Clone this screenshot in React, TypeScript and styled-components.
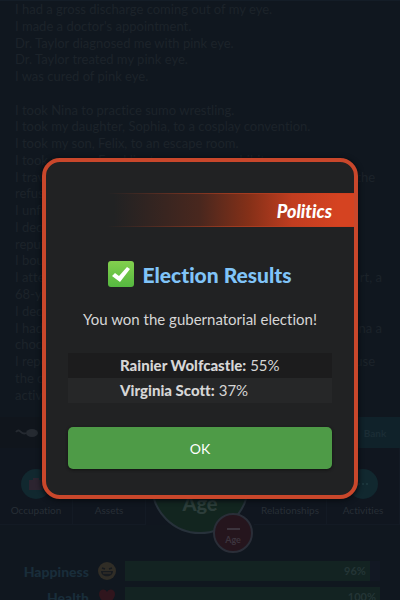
import React from "react";
import styled, { createGlobalStyle } from "styled-components";

const GlobalStyle = createGlobalStyle`
  * { box-sizing: border-box; }
  body {
    margin: 0;
    background: #10171f;
    font-family: Lato, "Open Sans", sans-serif;
    font-variant-ligatures: none;
    overflow: hidden;
  }
  button { font: inherit; color: inherit; border: 0; margin: 0; padding: 0; background: none; cursor: pointer; }
`;

const Screen = styled.div`
  position: relative;
  height: 100vh;
  overflow: hidden;
`;

const Game = styled.main`
  display: flex;
  flex-direction: column;
`;

const Journal = styled.section`
  height: 417px;
  padding: 0 15px;
  border-top: 1px solid #141d27;
  font-size: 13px;
  color: #1c232a;
`;

const Entry = styled.p`
  display: flex;
  justify-content: space-between;
  margin: 0;
  height: 1.29em;
  line-height: 1.29;
  white-space: pre;
`;

const LineEnd = styled.span<{ $short?: boolean }>`
  padding-right: ${(p) => (p.$short ? 10 : 3)}px;
`;

const BankBar = styled.div`
  display: flex;
  justify-content: space-between;
  align-items: center;
  height: 31px;
  padding-left: 15px;
  background: #10151c;
`;

const BankButton = styled.button`
  width: 80px;
  height: 31px;
  padding-left: 30px;
  background: #10222a;
  color: #1b2d35;
  font-size: 10px;
  font-weight: 700;
`;

const Nav = styled.nav`
  position: relative;
  display: grid;
  grid-template-columns: 1fr 1fr 108px 1fr 1fr;
  height: 77px;
  background: #10161f;
`;

const NavItem = styled.button`
  display: flex;
  flex-direction: column;
  align-items: center;
  gap: 4px;
  padding-top: 21px;
  border-right: 1px solid #131a24;
  border-bottom: 1px solid #131a24;
  color: #272e36;
  font-size: 10px;
  line-height: 14px;
`;

const NavIcon = styled.span`
  display: grid;
  place-items: center;
  width: 30px;
  height: 30px;
  border-radius: 50%;
  background: #11282f;
`;

const AgeButton = styled.button`
  position: absolute;
  left: 50%;
  top: -12px;
  width: 98px;
  height: 98px;
  margin-left: -49px;
  padding-top: 36px;
  border: 2px solid #27313a;
  border-radius: 50%;
  background: #12251f;
  color: #2c3d3a;
  font-size: 20px;
  font-weight: 900;
`;

const UndoAge = styled.button`
  position: absolute;
  left: 50%;
  top: 65px;
  display: flex;
  flex-direction: column;
  align-items: center;
  gap: 4px;
  width: 40px;
  height: 40px;
  margin-left: 13px;
  padding-top: 13px;
  border: 2px solid #2a2e38;
  border-radius: 50%;
  background: #25151d;
  color: #3c343d;
  font-size: 9px;
  line-height: 12px;
  font-weight: 700;
`;

const Minus = styled.span`
  width: 13px;
  height: 2px;
  background: #3c343d;
`;

const Stats = styled.section`
  display: grid;
  gap: 6px;
  padding: 36px 20px 0 0;
`;

const Stat = styled.div`
  display: grid;
  grid-template-columns: 89px 18px 1fr;
  column-gap: 9px;
  align-items: center;
  height: 20px;
`;

const StatName = styled.span`
  text-align: right;
  color: #192d3a;
  font-size: 14px;
  font-weight: 900;
`;

const Track = styled.div`
  height: 20px;
  background: #121823;
`;

const Fill = styled.div`
  height: 20px;
  padding-right: 4px;
  background: #132322;
  color: #243536;
  font-size: 11px;
  font-weight: 700;
  line-height: 20px;
  text-align: right;
`;

const Overlay = styled.div`
  position: absolute;
  inset: 0;
  padding: 158px 42px 0;
`;

const Dialog = styled.section`
  padding-top: 31px;
  padding-bottom: 26px;
  border: 4px solid #c9472b;
  border-radius: 18px;
  background: #212223;
  box-shadow: 0 1px 5px 1px #080d12;
  color: #d6d6d6;
`;

const Banner = styled.div`
  height: 34px;
  padding-right: 22px;
  background: linear-gradient(90deg, #212223 22%, #49271e 50%, #853018 66%, #c13d20 80%, #d54321 95%);
  border: solid;
  border-width: 1px 0;
  border-image: linear-gradient(90deg, #212223 20%, #9c3a20 60%, #d04020 90%) 1;
  color: #fff;
  font-size: 18px;
  font-style: italic;
  font-weight: 900;
  line-height: 34px;
  text-align: right;
`;

const Body = styled.div`
  padding: 34px 22px 0;
`;

const Title = styled.h1`
  display: flex;
  justify-content: center;
  align-items: center;
  gap: 8px;
  height: 26px;
  margin: 0;
  color: #80c4f8;
  font-size: 21px;
  font-weight: 900;
`;

const Message = styled.p`
  margin: 21px 0 23px;
  font-size: 15px;
  line-height: 22px;
  text-align: center;
`;

const Results = styled.table`
  display: block;
  width: 100%;
  font-size: 15px;
  line-height: 25px;
`;

const ResultRows = styled.tbody`
  display: block;
`;

const Result = styled.tr`
  display: flex;
  gap: 4px;
  padding-left: 52px;
  background: #1c1c1d;
  &:nth-child(even) { background: #262728; }
`;

const Candidate = styled.th`
  padding: 0;
  font-weight: 900;
  text-align: left;
`;

const Share = styled.td`
  padding: 0;
`;

const OkButton = styled.button`
  display: block;
  width: 100%;
  height: 42px;
  margin-top: 24px;
  border-radius: 5px;
  background: #4e9b47;
  box-shadow: 0 1px 3px #111;
  color: #fff;
  font-size: 14px;
`;

const entries: { start: string; end?: string; short?: boolean }[] = [
  { start: "I had a gross discharge coming out of my eye." },
  { start: "I made a doctor's appointment." },
  { start: "Dr. Taylor diagnosed me with pink eye." },
  { start: "Dr. Taylor treated my pink eye." },
  { start: "I was cured of pink eye." },
  { start: "" },
  { start: "I took Nina to practice sumo wrestling." },
  { start: "I took my daughter, Sophia, to a cosplay convention." },
  { start: "I took my son, Felix, to an escape room." },
  { start: "I took my son, Franklin, to a museum exhibit." },
  { start: "I traveled", end: "the", short: true },
  { start: "refused" },
  { start: "I unfollowed" },
  { start: "I declined" },
  { start: "reputation" },
  { start: "I bought" },
  { start: "I attended", end: "rt, a" },
  { start: "68-year-old" },
  { start: "I declined" },
  { start: "I had", end: "na a" },
  { start: "chocolate" },
  { start: "I reported", end: "use", short: true },
  { start: "the city" },
  { start: "activities" },
];

const App = () => (
  <Screen>
    <GlobalStyle />
    <Game>
      <Journal>
        {entries.map(({ start, end, short }, i) => (
          <Entry key={i}>
            <span>{start}</span>
            {end && <LineEnd $short={short}>{end}</LineEnd>}
          </Entry>
        ))}
      </Journal>
      <BankBar>
        <svg width="25" height="12" viewBox="0 0 25 12" aria-hidden="true">
          <path d="M1 5c4-5 5 4 10 1" fill="none" stroke="#252a31" strokeWidth="2" />
          <ellipse cx="17" cy="6" rx="6" ry="4" fill="#252a31" />
        </svg>
        <BankButton>Bank</BankButton>
      </BankBar>
      <Nav>
        <NavItem>
          <NavIcon>
            <svg width="14" height="12" viewBox="0 0 14 12" aria-hidden="true">
              <path d="M4 2V0h6v2h4v10H0V2z" fill="#2c2430" />
            </svg>
          </NavIcon>
          Occupation
        </NavItem>
        <NavItem><NavIcon />Assets</NavItem>
        <span />
        <NavItem><NavIcon />Relationships</NavItem>
        <NavItem>
          <NavIcon>
            <svg width="12" height="4" viewBox="0 0 12 4" fill="#1f3b42" aria-hidden="true">
              <circle cx="2" cy="2" r="1" /><circle cx="6" cy="2" r="1" /><circle cx="10" cy="2" r="1" />
            </svg>
          </NavIcon>
          Activities
        </NavItem>
        <AgeButton>Age</AgeButton>
        <UndoAge><Minus />Age</UndoAge>
      </Nav>
      <Stats>
        <Stat>
          <StatName>Happiness</StatName>
          <svg width="18" height="18" viewBox="0 0 18 18" aria-hidden="true">
            <circle cx="9" cy="9" r="9" fill="#302d26" />
            <path d="M4 6l3 1M14 6l-3 1" stroke="#171b20" strokeWidth="1.5" />
            <path d="M3 9h12c0 7-12 7-12 0z" fill="#171b20" />
            <path d="M5 11h8" stroke="#302d26" strokeWidth="1.5" />
          </svg>
          <Track><Fill style={{ width: "96%" }}>96%</Fill></Track>
        </Stat>
        <Stat>
          <StatName>Health</StatName>
          <svg width="18" height="18" viewBox="0 0 18 18" aria-hidden="true">
            <path d="M9 17C4 13 1 10 1 6c0-5 6-6 8-2 2-4 8-3 8 2 0 4-3 7-8 11z" fill="#30151d" />
          </svg>
          <Track><Fill style={{ width: "100%" }}>100%</Fill></Track>
        </Stat>
      </Stats>
    </Game>
    <Overlay>
      <Dialog role="dialog" aria-modal="true" aria-labelledby="dialog-title">
        <Banner>Politics</Banner>
        <Body>
          <Title id="dialog-title">
            <svg width="26" height="26" viewBox="0 0 26 26" aria-hidden="true">
              <defs>
                <linearGradient id="tick" x1="0" y1="0" x2="0" y2="1">
                  <stop offset="0" stopColor="#83d04e" />
                  <stop offset="1" stopColor="#55b840" />
                </linearGradient>
              </defs>
              <rect width="26" height="26" rx="3" fill="url(#tick)" />
              <path d="M4 15l3-3 4 3 8-9 3 2-10 13z" fill="#fff" />
            </svg>
            Election Results
          </Title>
          <Message>You won the gubernatorial election!</Message>
          <Results>
            <ResultRows>
              <Result>
                <Candidate scope="row">Rainier Wolfcastle:</Candidate>
                <Share>55%</Share>
              </Result>
              <Result>
                <Candidate scope="row">Virginia Scott:</Candidate>
                <Share>37%</Share>
              </Result>
            </ResultRows>
          </Results>
          <OkButton>OK</OkButton>
        </Body>
      </Dialog>
    </Overlay>
  </Screen>
);

export default App;
